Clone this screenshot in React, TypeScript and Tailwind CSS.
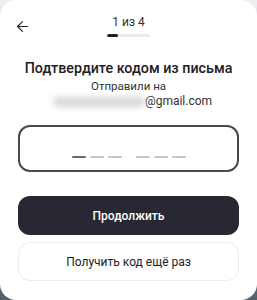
import { ArrowLeft } from "lucide-react";

const Dash = ({ active }: { active?: boolean }) => (
  <span className={`block h-[2px] w-[14px] rounded-full ${active ? "bg-[#6b6b6b]" : "bg-[#c4c4c8]"}`} />
);

export default function App() {
  return (
    <div className="w-[257px] h-[300px] bg-gradient-to-b from-[#eef0f2] to-[#55606c] font-['Roboto',sans-serif] text-[#21201f]">
      <div className="w-full h-full bg-white rounded-[16px] flex flex-col px-[18px]">
        {/* Header */}
        <div className="relative flex flex-col items-center pt-[14px] h-[52px]">
          <button className="absolute left-[-4px] top-[18px] p-0">
            <ArrowLeft size={17} strokeWidth={1.6} className="text-[#222]" />
          </button>
          <span className="text-[12px] leading-[16px] text-[#333]">1 из 4</span>
          <div className="mt-[4px] flex w-[43px] h-[3px] rounded-full bg-[#ececef] overflow-hidden">
            <div className="w-[11px] h-full bg-[#21201f] rounded-full" />
          </div>
        </div>

        {/* Text */}
        <h1 className="mt-[6px] text-center text-[14.3px] leading-[20px] font-medium whitespace-nowrap">
          Подтвердите кодом из письма
        </h1>
        <p className="mt-[1px] text-center text-[11.5px] leading-[15px] text-[#333]">Отправили на</p>
        <p className="text-center text-[12px] leading-[15px] text-[#333] flex justify-center items-center pl-[8px]">
          <span className="inline-block w-[92px] h-[10px] rounded-full bg-[#d8d8d8] blur-[3px]" />
          <span>@gmail.com</span>
        </p>

        {/* Code input */}
        <div className="mt-[16px] h-[47px] border-2 border-[#4a4a4a] rounded-[12px] flex items-end justify-center pb-[12px]">
          <div className="flex gap-[4px]">
            <Dash active />
            <Dash />
            <Dash />
          </div>
          <div className="w-[14px]" />
          <div className="flex gap-[4px]">
            <Dash />
            <Dash />
            <Dash />
          </div>
        </div>

        {/* Buttons */}
        <button className="mt-[24px] h-[39px] rounded-[12px] bg-[#282832] text-white text-[12px] font-medium">
          Продолжить
        </button>
        <button className="mt-[7px] h-[39px] rounded-[12px] border border-[#ececec] bg-white text-[12px] text-[#21201f]">
          Получить код ещё раз
        </button>
      </div>
    </div>
  );
}
